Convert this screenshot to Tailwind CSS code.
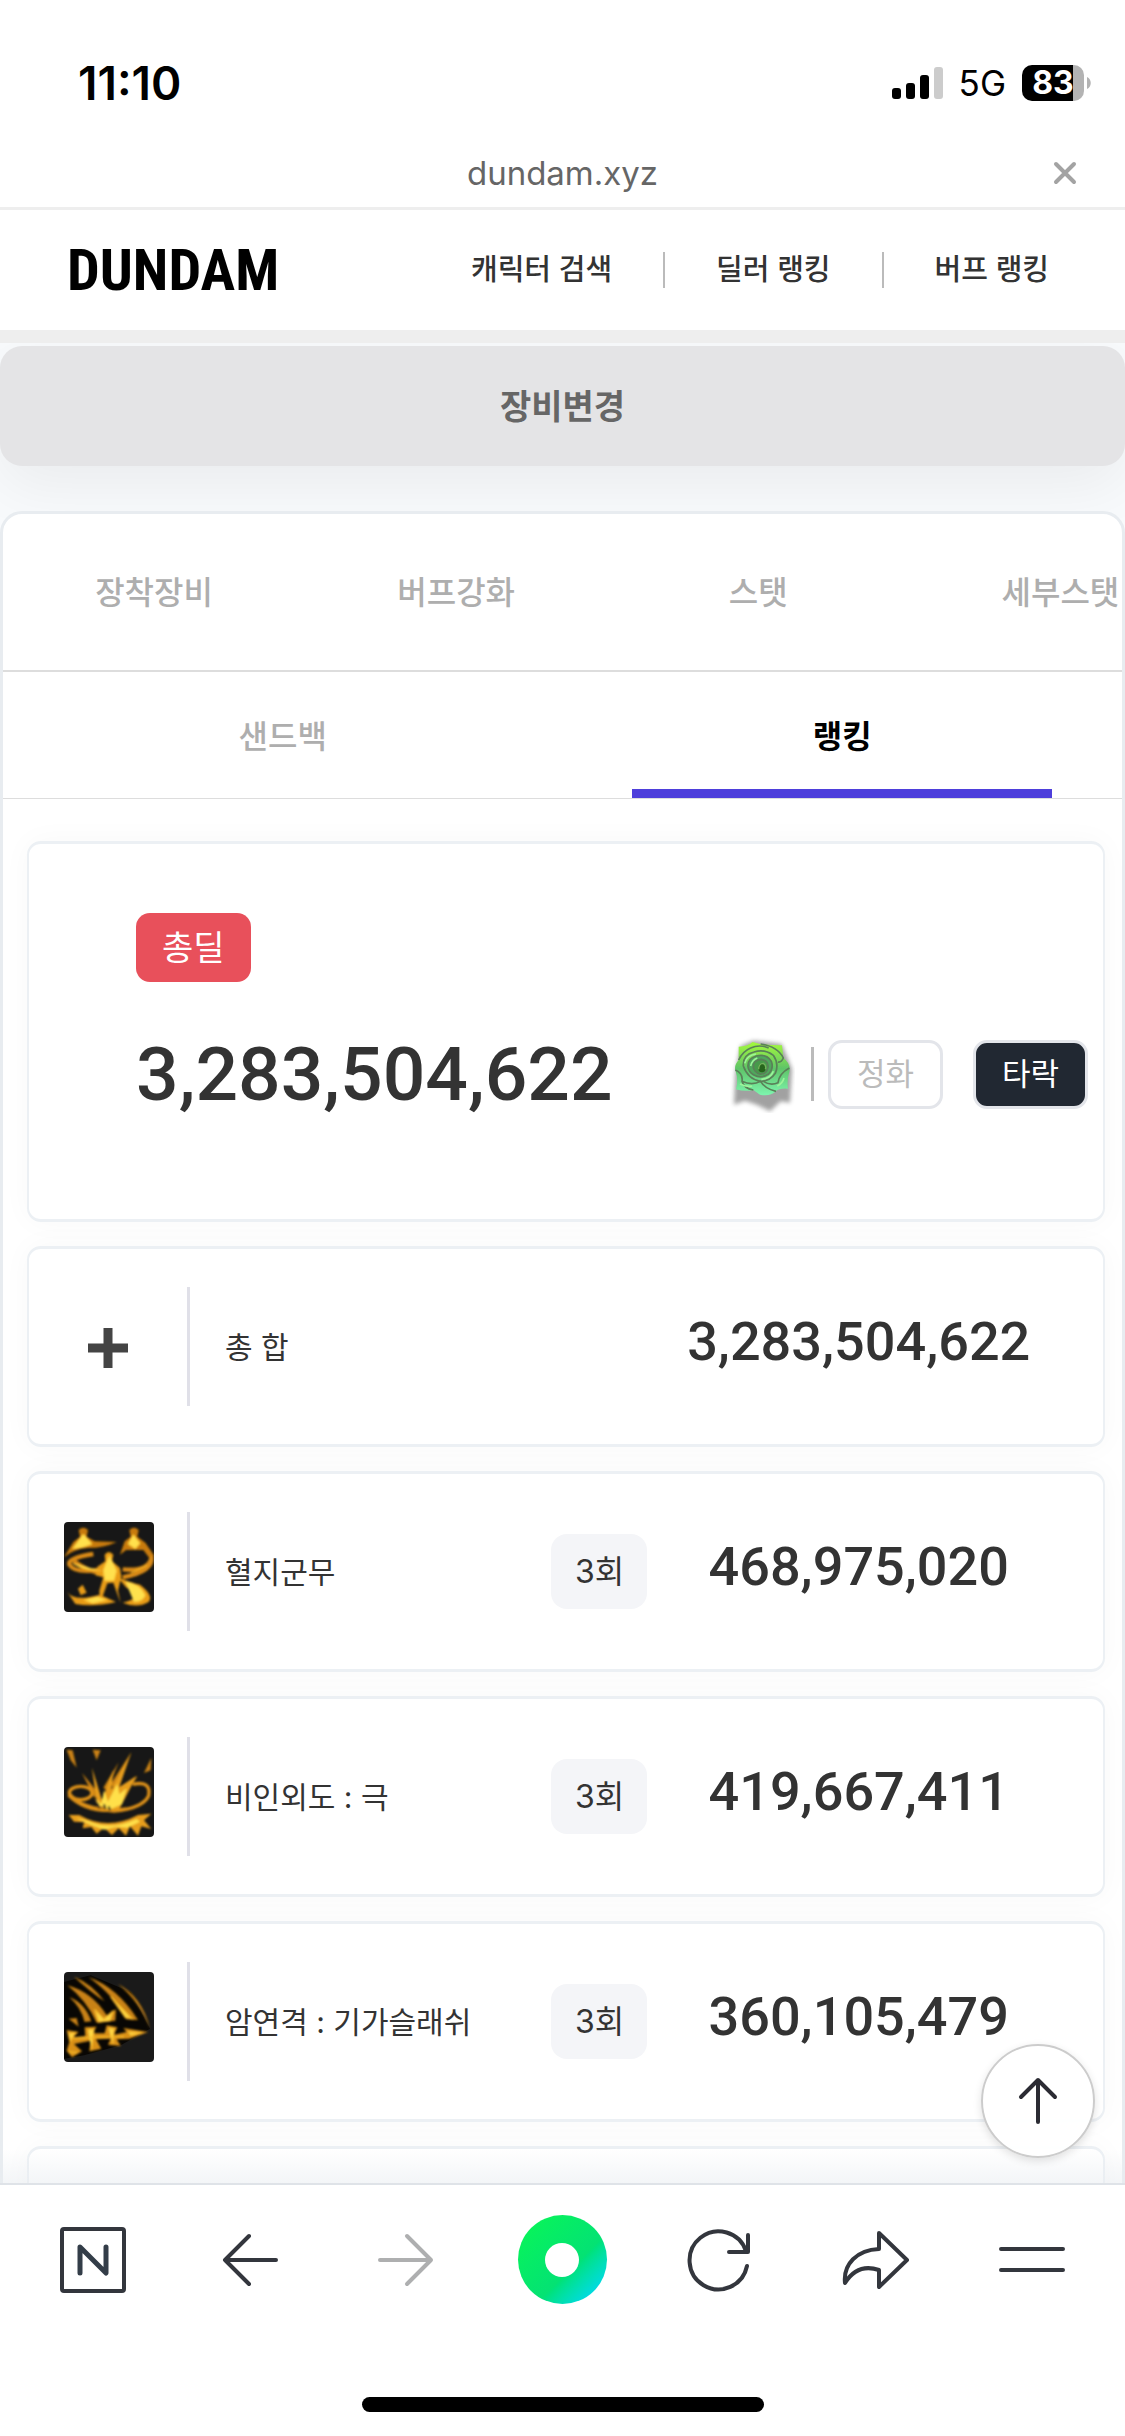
<!DOCTYPE html>
<html lang="ko">

<head>
    <meta charset="UTF-8">
    <meta name="viewport" content="width=device-width, initial-scale=1.0">
    <script src="https://cdn.jsdelivr.net/npm/@tailwindcss/browser@4"></script>
    <title>DUNDAM</title>
</head>

<body class="font-['Inter','Noto_Sans_CJK_KR',sans-serif] text-[#333]">
    <div class="flex flex-col h-screen overflow-hidden bg-white">
        <!-- status bar -->
        <div class="flex shrink-0 items-center justify-between pl-[78px] pr-[34px] pt-[53px] text-black">
            <span class="text-[46px] leading-[60px] font-semibold">11:10</span>
            <div class="flex items-center">
                <svg class="w-[51px] h-8" viewBox="0 0 51 32">
                    <rect x="0" y="21" width="9" height="11" rx="3" />
                    <rect x="14" y="16" width="9" height="16" rx="3" />
                    <rect x="28" y="8" width="9" height="24" rx="3" />
                    <rect x="42" y="0" width="9" height="32" rx="3" fill="#ccc" />
                </svg>
                <span class="ml-4 text-[35px] leading-[60px]">5G</span>
                <div class="ml-4 w-[62px] h-9 rounded-[10px] bg-linear-to-r from-black from-82% to-[#b3b3b3] to-82% text-center text-white text-[32px] leading-9 font-bold">83</div>
                <svg class="ml-[3px] w-1 h-3" viewBox="0 0 4 12">
                    <path d="M0 0C5 2 5 10 0 12z" fill="#b3b3b3" />
                </svg>
            </div>
        </div>

        <!-- address bar -->
        <div class="grid shrink-0 grid-cols-[1fr_auto_1fr] items-center pt-[45px] pb-[19px] px-[46px] border-b-3 border-[#eee]">
            <span></span>
            <span class="text-[33px] leading-[30px] text-[#666]">dundam.xyz</span>
            <button class="justify-self-end" aria-label="닫기">
                <svg class="w-7 h-7" viewBox="0 0 28 28" fill="none" stroke="#a3a3a3" stroke-width="4" stroke-linecap="round">
                    <path d="M5 5L23 23M23 5L5 23" />
                </svg>
            </button>
        </div>

        <!-- site header -->
        <header class="flex shrink-0 items-center justify-between pl-[67px] pr-[76px] h-[133px] border-b-13 border-[#eee]">
            <a href="#" class="font-['Roboto_Condensed','Noto_Sans_CJK_KR',sans-serif] font-bold text-[58px] leading-[60px] text-black">DUNDAM</a>
            <nav class="flex items-center gap-[51px] text-[29px] leading-[36px] font-medium">
                <a href="#">캐릭터 검색</a>
                <span class="w-[2px] h-9 bg-[#bbb]"></span>
                <a href="#">딜러 랭킹</a>
                <span class="w-[2px] h-9 bg-[#bbb]"></span>
                <a href="#">버프 랭킹</a>
            </nav>
        </header>

        <main class="relative flex-1 min-h-0 overflow-hidden bg-[#f8fafc] pt-[3px]">
            <button class="block w-full h-[120px] rounded-[22px] bg-[#e4e4e6] text-[34px] font-bold text-[#666] shadow-[0_20px_60px_rgba(0,0,0,0.06)]">장비변경</button>

            <section class="relative mt-[45px] h-full rounded-t-[22px] border-3 border-[#e8ecf0] bg-white">
                <div class="flex overflow-hidden text-[32px] leading-[48px] font-medium text-[#aeaeae] border-b-2 border-[#ddd]">
                    <button class="w-[27%] shrink-0 pt-[55px] pb-[53px]">장착장비</button>
                    <button class="w-[27%] shrink-0 pt-[55px] pb-[53px]">버프강화</button>
                    <button class="w-[27%] shrink-0 pt-[55px] pb-[53px]">스탯</button>
                    <button class="w-[27%] shrink-0 pt-[55px] pb-[53px]">세부스탯</button>
                </div>
                <div class="grid grid-cols-2 justify-items-center text-[32px] leading-[48px] border-b border-[#ddd]">
                    <button class="w-3/4 pt-[41px] pb-[37px] font-medium text-[#aeaeae]">샌드백</button>
                    <button class="w-3/4 pt-[41px] pb-[28px] font-bold text-black border-b-9 border-[#4e3fdb]">랭킹</button>
                </div>

                <div class="flex flex-col gap-6 pt-[42px] pl-6 pr-[17px]">
                    <div class="rounded-[14px] border-x-2 border-y-3 border-[#ecf0f4] bg-white pt-[69px] pb-[97px] pl-[107px] pr-[15px] shadow-[0_0_30px_rgba(0,0,0,0.03)]">
                        <span class="inline-block align-top rounded-[14px] bg-[#e8505b] px-[26px] text-[34px] leading-[69px] text-white">총딜</span>
                        <div class="mt-11 flex items-center">
                            <strong class="flex-1 font-['Roboto',sans-serif] text-[75px] leading-[96px] font-medium">3,283,504,622</strong>
                            <svg class="w-[65px] h-[77px]" viewBox="60 60 195 231">
                                <defs>
                                    <linearGradient id="leaf" x1="0" y1="0" x2="0" y2="1">
                                        <stop offset="0" stop-color="#a4fa3c" />
                                        <stop offset="0.5" stop-color="#5fc468" />
                                        <stop offset="1" stop-color="#7df5ae" />
                                    </linearGradient>
                                    <filter id="soft" x="-20%" y="-20%" width="140%" height="140%">
                                        <feGaussianBlur stdDeviation="7" />
                                    </filter>
                                    <filter id="petal">
                                        <feGaussianBlur stdDeviation="2" />
                                    </filter>
                                </defs>
                                <path d="M76 170L92 90L130 74L215 84L246 160L240 260L212 256L180 286L140 266L105 254L72 266z" fill="#555" opacity="0.55" filter="url(#soft)" />
                                <g filter="url(#petal)">
                                    <path d="M86 92Q112 92 128 78L150 84Q184 88 216 88L220 126Q244 144 238 168Q230 192 234 218Q206 216 198 226Q180 242 150 236L130 222Q104 228 78 220Q86 192 76 162Q72 148 86 132z" fill="url(#leaf)" />
                                    <g fill="none" stroke="#5a8058" stroke-width="5">
                                        <path d="M86 132Q98 106 122 96Q148 84 176 96M152 84Q204 92 220 126Q214 140 204 138M76 162Q100 172 96 196Q102 218 130 222M96 196Q126 210 152 196Q164 218 198 226M238 156Q208 172 204 200Q182 210 160 196" />
                                        <path d="M100 150Q98 116 132 108Q164 98 190 118Q208 144 196 172Q180 196 152 196Q114 190 100 150z" />
                                        <path d="M114 152Q112 128 138 120Q170 112 184 136Q192 158 176 174Q154 190 130 176Q116 168 114 152z" fill="#4fa85c" />
                                        <path d="M130 156Q128 132 154 130Q176 134 174 154Q170 176 148 174Q136 170 130 156z" fill="#479a4c" />
                                    </g>
                                    <path d="M104 142Q110 118 138 114M190 166Q182 188 154 190M122 150Q126 132 142 126M90 204Q110 214 126 210M222 186Q218 202 202 210" fill="none" stroke="#9df59a" stroke-width="5" />
                                    <ellipse cx="156" cy="156" rx="11" ry="13" fill="#28651e" />
                                    <path d="M146 160Q146 142 160 142Q170 148 166 160" fill="none" stroke="#72b35a" stroke-width="4" />
                                </g>
                            </svg>
                            <span class="ml-4 w-[3px] h-[54px] bg-[#bbb]"></span>
                            <button class="ml-[14px] w-[115px] h-[69px] rounded-[14px] border-3 border-[#e3e5ea] text-[31px] text-[#bbb]">정화</button>
                            <button class="ml-[30px] w-[115px] h-[69px] rounded-[14px] border-3 border-[#e3e5ea] bg-[#212832] text-[31px] text-white">타락</button>
                        </div>
                    </div>

                    <div class="flex items-center rounded-[14px] border-x-2 border-y-3 border-[#ecf0f4] bg-white py-[38px] pl-[35px] pr-[33px] shadow-[0_0_30px_rgba(0,0,0,0.03)]">
                        <svg class="w-[90px] h-[90px]" viewBox="0 0 90 90">
                            <path d="M24 46H64M44 26V66" stroke="#444" stroke-width="9" />
                        </svg>
                        <span class="ml-[33px] w-[3px] h-[119px] bg-[#e0e0e8]"></span>
                        <span class="flex-1 ml-[35px] text-[30px] leading-[36px]">총 합</span>
                        <span class="w-[42%] mb-[10px] text-center font-['Roboto',sans-serif] text-[54px] leading-[60px] font-medium">3,283,504,622</span>
                    </div>

                    <div class="flex items-center rounded-[14px] border-x-2 border-y-3 border-[#ecf0f4] bg-white py-[38px] pl-[35px] pr-[33px] shadow-[0_0_30px_rgba(0,0,0,0.03)]">
                        <svg class="w-[90px] h-[90px] mb-[10px] rounded-[4px]" viewBox="0 0 270 270">
                            <defs>
                                <filter id="glow" x="-10%" y="-10%" width="120%" height="120%">
                                    <feGaussianBlur stdDeviation="3" />
                                </filter>
                            </defs>
                            <rect width="270" height="270" fill="#171717" />
                            <g filter="url(#glow)">
                                <path d="M0 106L28 60L48 44L44 24Q58 10 72 24L68 44L92 58L158 60Q120 78 72 78Q30 80 0 106zM168 98L182 58L200 44L196 24Q210 10 224 24L220 44L244 62L270 100L262 116L238 84L186 84z" fill="#c77a08" />
                                <path d="M88 96Q10 108 16 128Q34 156 110 142M262 102Q272 148 176 166M30 118Q90 160 120 150M176 142Q250 150 262 110" fill="none" stroke="#d98a12" stroke-width="13" />
                                <path d="M106 206L118 166L94 160L100 134L124 118L122 98Q134 82 148 98L144 118L168 138L172 164L162 206L170 244L148 182L130 184L108 246zM10 210Q30 240 108 218L156 240Q90 256 34 246zM160 164Q190 180 228 188Q270 220 254 240Q220 260 176 242Q210 236 222 216Q200 208 186 196zM42 200L56 188L68 212L50 220z" fill="#e79b19" />
                                <path d="M26 80L56 38L60 38L84 66Q52 80 26 80zM192 66L208 38L228 64L214 80zM118 144L136 100L158 146L150 176L122 176zM184 178Q230 186 244 220Q236 240 210 240M60 234L100 224L130 234L86 244zM202 152L250 130M26 124Q60 146 110 146" fill="#ffe14d" stroke="#ffc22e" stroke-width="3" />
                            </g>
                        </svg>
                        <span class="ml-[33px] w-[3px] h-[119px] bg-[#e0e0e8]"></span>
                        <span class="flex-1 ml-[35px] text-[30px] leading-[36px]">혈지군무</span>
                        <span class="w-24 rounded-2xl bg-[#f4f5f8] text-center text-[32px] leading-[75px]">3회</span>
                        <span class="w-[42%] mb-[10px] text-center font-['Roboto',sans-serif] text-[54px] leading-[60px] font-medium">468,975,020</span>
                    </div>

                    <div class="flex items-center rounded-[14px] border-x-2 border-y-3 border-[#ecf0f4] bg-white py-[38px] pl-[35px] pr-[33px] shadow-[0_0_30px_rgba(0,0,0,0.03)]">
                        <svg class="w-[90px] h-[90px] mb-[10px] rounded-[4px]" viewBox="0 0 270 270">
                            <rect width="270" height="270" fill="#171717" />
                            <g filter="url(#glow)">
                                <path d="M8 8L26 10L38 62L20 40zM86 8L110 10L98 40zM240 78L262 32L260 70zM54 78L100 134L112 166L88 146zM202 16L152 122L138 114zM164 46L130 132L118 122zM222 88L168 160L150 150z" fill="#c98112" />
                                <ellipse cx="50" cy="138" rx="34" ry="20" fill="none" stroke="#df9219" stroke-width="10" />
                                <path d="M206 112Q262 100 254 146Q236 184 150 192Q50 184 16 140M14 144Q70 204 188 186" fill="none" stroke="#dd9018" stroke-width="10" />
                                <path d="M68 114L98 164L84 62L114 160L148 68L142 128L202 16L166 120L218 86L182 156L164 190L106 180zM14 204L46 204Q130 252 222 204L262 200L240 220L262 246L232 238L222 266L198 238L186 266L164 244L144 264L120 242L98 260L82 240L56 244L60 226L30 224z" fill="#e79e1c" />
                                <path d="M96 156L112 170L120 130L132 164L160 110L166 142L188 124L174 172L136 188L104 174zM34 212L72 222Q140 252 218 216L228 224L190 242L156 240L120 248L76 232z" fill="#ffe04a" />
                                <path d="M100 168L106 184M120 172L124 186M134 178L138 190" stroke="#171717" stroke-width="6" />
                            </g>
                        </svg>
                        <span class="ml-[33px] w-[3px] h-[119px] bg-[#e0e0e8]"></span>
                        <span class="flex-1 ml-[35px] text-[30px] leading-[36px]">비인외도 : 극</span>
                        <span class="w-24 rounded-2xl bg-[#f4f5f8] text-center text-[32px] leading-[75px]">3회</span>
                        <span class="w-[42%] mb-[10px] text-center font-['Roboto',sans-serif] text-[54px] leading-[60px] font-medium">419,667,411</span>
                    </div>

                    <div class="flex items-center rounded-[14px] border-x-2 border-y-3 border-[#ecf0f4] bg-white py-[38px] pl-[35px] pr-[33px] shadow-[0_0_30px_rgba(0,0,0,0.03)]">
                        <svg class="w-[90px] h-[90px] mb-[10px] rounded-[4px]" viewBox="0 0 270 270">
                            <rect width="270" height="270" fill="#1a1a1a" />
                            <path d="M0 30L80 10L200 60L258 170L170 220L60 250L0 260z" fill="#090704" />
                            <g filter="url(#glow)">
                                <path d="M30 14Q84 36 122 88Q82 62 30 14zM74 16Q160 46 222 144L186 142Q150 70 74 16zM10 40Q84 60 128 130L156 112L154 146L98 152Q66 84 10 40zM162 36Q234 74 258 170Q228 90 162 36zM16 76Q62 92 82 148L62 150Q50 104 16 76zM14 140L38 138L44 164z" fill="#c98213" />
                                <path d="M8 174L44 180L28 196L64 192L62 166L98 164L84 184L122 184L128 160L160 166L150 188L188 180L178 168L252 180L196 200L158 202L170 222L132 218L140 200L96 202L112 230L76 238L80 206L30 216L54 238L24 256L8 236L16 210z" fill="#d99018" />
                                <path d="M92 112L120 142L148 116L138 146L104 150zM140 74L204 140L184 136zM14 184L34 182L20 206zM72 172L90 172L82 232M134 168L150 170L146 216M192 180L236 182L200 190M14 240L40 242M28 198L180 194" fill="#ffda45" stroke="#f7b92b" stroke-width="4" />
                            </g>
                        </svg>
                        <span class="ml-[33px] w-[3px] h-[119px] bg-[#e0e0e8]"></span>
                        <span class="flex-1 ml-[35px] text-[30px] leading-[36px]">암연격 : 기가슬래쉬</span>
                        <span class="w-24 rounded-2xl bg-[#f4f5f8] text-center text-[32px] leading-[75px]">3회</span>
                        <span class="w-[42%] mb-[10px] text-center font-['Roboto',sans-serif] text-[54px] leading-[60px] font-medium">360,105,479</span>
                    </div>

                    <div class="h-[201px] rounded-[14px] border-x-2 border-y-3 border-[#ecf0f4] bg-white shadow-[0_0_30px_rgba(0,0,0,0.03)]"></div>
                </div>
            </section>

            <div class="absolute inset-x-0 bottom-0 h-9 bg-linear-to-b from-transparent to-[#e8ecf0]/50 border-b-2 border-[#dfe3e8]"></div>
            <button class="absolute right-[30px] bottom-[27px] w-[114px] h-[114px] rounded-full border-2 border-[#ccc] bg-white/95 flex items-center justify-center shadow-[0_3px_8px_rgba(0,0,0,0.12)]" aria-label="맨 위로">
                <svg class="w-12 h-12" viewBox="0 0 48 48" fill="none" stroke="#2b2b33" stroke-width="4" stroke-linecap="round" stroke-linejoin="round">
                    <path d="M24 45V3M7 20L24 3L41 20" />
                </svg>
            </button>
        </main>

        <!-- browser toolbar -->
        <footer class="shrink-0 pt-[30px] pb-6 bg-white">
            <div class="grid grid-cols-7 items-center justify-items-center px-[15px]">
                <button aria-label="네이버 홈">
                    <svg class="w-[68px] h-[68px]" viewBox="0 0 68 68" fill="none" stroke="#33363d" stroke-width="4" stroke-linecap="round" stroke-linejoin="round">
                        <rect x="3" y="3" width="62" height="62" rx="2" />
                        <path d="M21 47V21L47 47V21" stroke="#333d48" stroke-width="5" />
                    </svg>
                </button>
                <button aria-label="뒤로">
                    <svg class="w-[58px] h-[58px]" viewBox="0 0 58 58" fill="none" stroke="#33363d" stroke-width="4" stroke-linecap="round" stroke-linejoin="round">
                        <path d="M55 29H4M28 5L4 29L28 53" />
                    </svg>
                </button>
                <button aria-label="앞으로">
                    <svg class="w-[58px] h-[58px]" viewBox="0 0 58 58" fill="none" stroke="#aeafb0" stroke-width="4" stroke-linecap="round" stroke-linejoin="round">
                        <path d="M3 29H54M30 5L54 29L30 53" />
                    </svg>
                </button>
                <button aria-label="그린닷" class="w-[89px] h-[89px] rounded-full flex items-center justify-center bg-linear-135 from-[#08f25c] from-15% via-[#04e273] via-60% to-[#00d8f0] to-90%">
                    <span class="w-[34px] h-[34px] rounded-full bg-white"></span>
                </button>
                <button aria-label="새로고침">
                    <svg class="w-[66px] h-[66px]" viewBox="0 0 66 66" fill="none" stroke="#33363d" stroke-width="4" stroke-linecap="round" stroke-linejoin="round">
                        <path d="M61 39A29 29 0 1 1 60 24M62 8V25H43" />
                    </svg>
                </button>
                <button aria-label="공유">
                    <svg class="w-[70px] h-[62px]" viewBox="0 0 70 62" fill="none" stroke="#33363d" stroke-width="4" stroke-linecap="round" stroke-linejoin="round">
                        <path d="M39 4L67 31L39 58V41C24 36 13 41 5 54C3 35 17 21 39 20z" />
                    </svg>
                </button>
                <button aria-label="메뉴">
                    <svg class="w-[68px] h-[30px]" viewBox="0 0 68 30" fill="none" stroke="#33363d" stroke-width="4" stroke-linecap="round">
                        <path d="M3 4H65M3 25H65" />
                    </svg>
                </button>
            </div>
            <div class="mx-auto mt-[93px] w-[402px] h-[15px] rounded-full bg-black"></div>
        </footer>
    </div>
</body>

</html>
